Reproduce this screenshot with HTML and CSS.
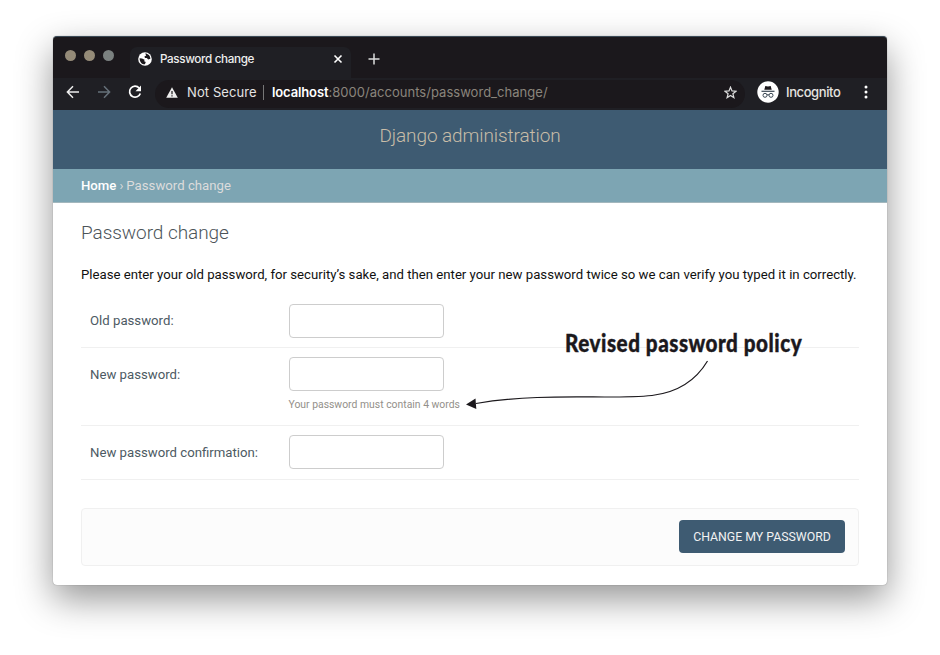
FILE: index.html
```html
<!DOCTYPE html>
<html lang="en">
<head>
<meta charset="utf-8">
<title>Password change</title>
<link rel="stylesheet" href="styles.css">
</head>
<body>
<div class="window">
  <div class="tabs">
    <div class="lights"><i></i><i></i><i class="dim"></i></div>
    <div class="tab">
      <svg class="globe" width="14" height="14" viewBox="0 0 14 14"><circle cx="7" cy="7" r="6.8" fill="#fff"/><path d="M1.6 6.2 4 6.6l2.6 1.2-.4 1.4 1.6.9-.9 2.2C4 12.500 1.600 10 1.600 6.200zM7.200 1.600c2.800 0 5.200 2.300 5.200 5.200l-2.200.6-1.400-1.500-1.800.2-.6-1.600 1.800-.9z" fill="#1b181c"/></svg>
      <span class="tab-title">Password change</span>
      <svg class="close" width="10" height="10" viewBox="0 0 10 10"><path d="m1.500 1.500 7 7m0-7-7 7" stroke="#fff" stroke-width="1.600"/></svg>
    </div>
    <svg class="plus" width="12" height="12" viewBox="0 0 12 12"><path d="M6 .5v11M.5 6h11" stroke="#ddd" stroke-width="1.500"/></svg>
  </div>
  <div class="toolbar">
    <div class="nav">
      <svg width="14" height="14" viewBox="0 0 14 14" fill="none" stroke="#eee" stroke-width="1.500"><path d="M13 7H1.500M7 1.300 1.400 7 7 12.700"/></svg>
      <svg width="14" height="14" viewBox="0 0 14 14" fill="none" stroke="#66717a" stroke-width="1.500"><path d="M1 7h11.500M7 1.300 12.600 7 7 12.700"/></svg>
      <svg width="14" height="14" viewBox="0 0 14 14"><path d="M11.200 3A5.500 5.500 0 1 0 12.300 8.400" fill="none" stroke="#fff" stroke-width="1.700"/><path d="M13 .6v5.600H7.500z" fill="#fff"/></svg>
    </div>
    <div class="address">
      <svg class="warn" width="12" height="11" viewBox="0 0 12 11"><path d="M6 .2 11.800 10.800H.2z" fill="#eee"/><path d="M6 4v3.200M6 8.200v1.300" stroke="#1b181c" stroke-width="1.200"/></svg>
      <span class="not-secure">Not Secure</span>
      <span class="divider"></span>
      <span class="url"><b>localhost</b>:8000/accounts/password_change/</span>
      <svg class="star" width="13" height="13" viewBox="0 0 13 13"><path d="m6.500 1.200 1.500 3.700 4 .3-3.100 2.500 1 3.900-3.400-2.100-3.400 2.100 1-3.900L1 5.200l4-.3z" fill="none" stroke="#ddd" stroke-width="1.200"/></svg>
    </div>
    <div class="profile">
      <svg width="22" height="22" viewBox="0 0 22 22"><circle cx="11" cy="11" r="10.700" fill="#fff"/><path d="M7.300 8.800 8.300 4.900l2.700.6 2.700-.6 1 3.900z" fill="#1b181c"/><path d="M4.500 10.300h13" stroke="#3b4854" stroke-width="1.200"/><g fill="none" stroke="#3b4854"><circle cx="8" cy="14.300" r="2"/><circle cx="14" cy="14.300" r="2"/><path d="M10 14q1-.7 2 0"/></g></svg>
      <span>Incognito</span>
      <svg class="dots" width="4" height="14" viewBox="0 0 4 14" fill="#fff"><circle cx="2" cy="2" r="1.500"/><circle cx="2" cy="7" r="1.500"/><circle cx="2" cy="12" r="1.500"/></svg>
    </div>
  </div>
  <header class="site-header"><span>Django administration</span></header>
  <nav class="crumbs"><a>Home</a><span class="sep">›</span><span class="here">Password change</span></nav>
  <main class="content">
    <h1><span>Password change</span></h1>
    <p class="intro">Please enter your old password, for security’s sake, and then enter your new password twice so we can verify you typed it in correctly.</p>
    <form>
      <div class="row first"><label for="old">Old password:</label><div><input id="old" type="password"></div></div>
      <div class="row tall"><label for="new">New password:</label><div><input id="new" type="password"><p class="help">Your password must contain 4 words</p></div></div>
      <div class="row"><label for="confirm">New password confirmation:</label><div><input id="confirm" type="password"></div></div>
      <div class="submit-row"><button type="button">CHANGE MY PASSWORD</button></div>
    </form>
  </main>
  <div class="note">Revised password policy</div>
  <svg class="arrow" width="250" height="56" viewBox="0 0 250 56"><path d="M243.500 5C231 26 213 36.500 188 39.500C145 44 80 36 12 47.500" fill="none" stroke="#1b181c" stroke-width="1.200"/><path d="m2 48.500 9.500-6 .8 10.500z" fill="#1b181c"/></svg>
</div>
</body>
</html>
```

FILE: styles.css
```css
* { box-sizing: border-box; }
body { display: flow-root; height: 655px; margin: 0; background: #fff; font-family: Roboto, sans-serif; }
svg { display: block; flex: none; }
p, h1 { margin: 0; font-weight: 400; white-space: nowrap; }

.window {
  position: relative;
  width: 834px;
  height: 549px;
  margin: 36px 0 0 53px;
  background: #fff;
  border-radius: 4px;
  box-shadow: 0 0 1px rgba(0, 0, 0, .5), 0 14px 36px rgba(0, 0, 0, .42);
}

.tabs {
  display: flex;
  height: 42px;
  padding-left: 12px;
  background: #1b181c;
  border-top: 1px solid #3b4a56;
  border-radius: 4px 4px 0 0;
}
.lights { display: flex; gap: 8px; width: 65px; padding-top: 13px; }
.lights i { width: 11px; height: 11px; border-radius: 50%; background: #958b78; }
.lights .dim { background: #7b8180; }
.tab {
  display: flex;
  align-items: center;
  width: 221px;
  height: 31px;
  margin-top: 10px;
  padding: 0 8px;
  background: #1f1f24;
  border-radius: 7px 7px 0 0;
  color: #eee;
  font: 500 11.7px Inter, sans-serif;
}
.globe { margin-right: 8px; }
.tab-title { letter-spacing: -.36px; margin-top: -8px; }
.globe, .close { position: relative; top: -4px; }
.close { margin-left: auto; }
.plus { margin: 16px 0 0 17px; }

.toolbar {
  display: flex;
  align-items: center;
  height: 32px;
  padding: 0 18px 4px 13px;
  background: #1f1f24;
  font-family: Inter, sans-serif;
  font-size: 13px;
}
.nav { display: flex; gap: 17px; width: 89px; }
.address {
  display: flex;
  align-items: center;
  width: 590px;
  height: 28px;
  margin-top: 2px;
  margin-bottom: -2px;
  padding: 0 8px 4px 11px;
  border-radius: 14px;
  background: #1b181c;
}
.warn { margin-right: 9px; }
.not-secure { color: #e4e4e4; width: 69px; letter-spacing: .1px; white-space: nowrap; }
.divider { width: 1px; height: 15px; margin: 0 8px 0 7px; background: #777; }
.url { color: #8a857c; letter-spacing: .03px; }
.url b { color: #fff; font-weight: 600; letter-spacing: -.12px; }
.star { margin-left: auto; }
.profile { display: flex; align-items: center; flex: 1; padding-left: 12px; color: #e6e4e0; }
.profile span { margin: 0 0 0 7px; letter-spacing: -.4px; font-weight: 500; }
.dots { margin-left: auto; margin-right: 1px; }

.site-header {
  display: flex;
  justify-content: center;
  height: 59px;
  padding-top: 14px;
  background: #3e5b72;
  color: #c8bda8;
  font-size: 19px;
  line-height: 24px;
  font-weight: 300;
  letter-spacing: -.1px;
}
.crumbs {
  display: flex;
  height: 34px;
  padding-left: 28px;
  background: #7da5b3;
  border-bottom: 1px solid #a3b7bd;
  color: #dcdcdc;
  font-size: 13.2px;
  line-height: 34px;
}
.crumbs a { color: #fff; font-weight: 500; }
.sep { margin: 0 3px 0 3px; }

.content { padding: 18px 28px 0; }
h1 { font-size: 19px; line-height: 24px; font-weight: 300; color: #4c5459; letter-spacing: -.06px; }
.intro { margin-top: 22px; font-size: 13.2px; line-height: 16px; color: #111; }
form { margin-top: 11px; }
.row {
  display: flex;
  height: 54px;
  padding: 9px 0 0 9px;
  border-bottom: 1px solid #f0f0f0;
}
.row.first { padding-top: 10px; }
.row.first label { line-height: 33px; }
.row.tall { height: 78px; }
.row label { width: 198.5px; font-size: 13.2px; line-height: 35px; color: #4d5a63; }
.row input {
  display: block;
  width: 155px;
  height: 34px;
  border: 1px solid #cdcdcd;
  border-radius: 4px;
  background: #fff;
}
.help { margin-top: 7px; font-size: 10.4px; line-height: 14px; color: #93908a; }
.submit-row {
  display: flex;
  justify-content: flex-end;
  height: 58px;
  margin-top: 28px;
  padding: 11px 13px;
  background: #fcfcfc;
  border: 1px solid #f0f0f0;
  border-radius: 4px;
}
button {
  width: 166px;
  height: 33px;
  padding: 0;
  border: 0;
  border-radius: 4px;
  background: #3e5b72;
  color: #f2f2f2;
  font: 400 12.3px Roboto, sans-serif;
  white-space: nowrap;
}

.note {
  position: absolute;
  left: 512px;
  top: 292px;
  color: #1b181c;
  font: 900 24px/29px Lato, sans-serif;
  letter-spacing: .6px;
  white-space: nowrap;
  -webkit-text-stroke: .4px #1b181c;
  transform: scaleX(.86);
  transform-origin: 0 0;
}
.arrow { position: absolute; left: 411px; top: 320px; }
```
